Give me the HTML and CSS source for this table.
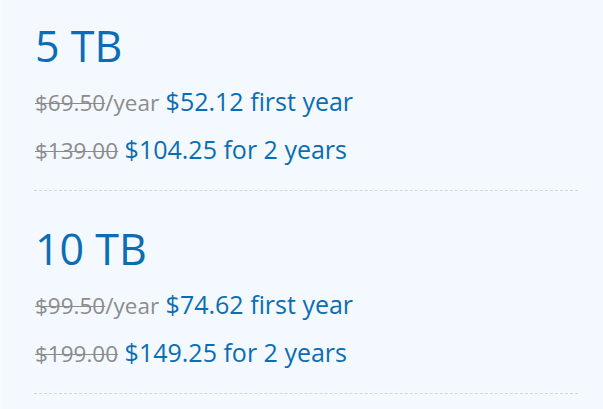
FILE: index.html
```html
<!DOCTYPE html>
<html lang="en">
<head>
<meta charset="utf-8">
<link rel="stylesheet" href="styles.css">
</head>
<body>
<div class="plans">
  <div class="plan">
    <div class="size">5 TB</div>
    <div class="row"><span class="old"><s>$69.50</s>/year</span> <span class="new">$52.12 first year</span></div>
    <div class="row"><span class="old"><s>$139.00</s></span> <span class="new">$104.25 for 2 years</span></div>
  </div>
  <div class="plan">
    <div class="size">10 TB</div>
    <div class="row"><span class="old"><s>$99.50</s>/year</span> <span class="new">$74.62 first year</span></div>
    <div class="row"><span class="old"><s>$199.00</s></span> <span class="new">$149.25 for 2 years</span></div>
  </div>
</div>
</body>
</html>
```
FILE: styles.css
```css
html, body {
  margin: 0;
  padding: 0;
}
body {
  background: #f3f9fe;
  font-family: "Open Sans", "Noto Sans", sans-serif;
  height: 409px;
  overflow: hidden;
  border-left: 2px solid #f8fbfe;
}
.plans {
  padding: 0 25px 0 32px;
}
.plan {
  padding: 33px 0 17px 1px;
  border-bottom: 1px dashed #cfd6dc;
}
.plan:first-child {
  padding-top: 21px;
}
.size {
  font-size: 43px;
  line-height: 50px;
  color: #0b6db3;
  margin-bottom: 6px;
}
.row {
  line-height: 48px;
  font-size: 25px;
  white-space: nowrap;
}
.old {
  font-size: 22.5px;
  line-height: 1;
  color: #8c8c8c;
}
.old s {
  text-decoration-thickness: 1px;
}
.new {
  line-height: 1;
  color: #0b6db3;
}
```
